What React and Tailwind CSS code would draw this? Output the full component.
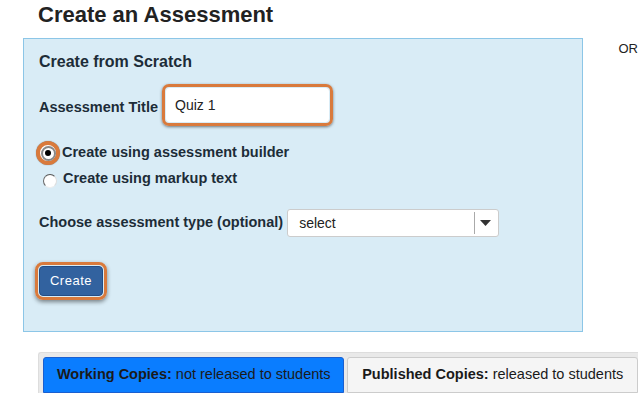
export default function App() {
  return (
    <div className="w-[638px] h-[393px] overflow-hidden bg-white relative" style={{ fontFamily: '"Liberation Sans", Arial, sans-serif' }}>
      <h1 className="pl-[38px] pt-[3px] h-[38px] text-[22px] font-bold text-[#222] leading-[24px]">Create an Assessment</h1>
      <div className="flex">
        <div className="ml-[23px] w-[561px] h-[294px] bg-[#d9ecf6] border border-[#8cc6e7] pl-[15px] pt-[13px] text-[#1d2c38]">
          <div className="text-[16px] font-bold leading-[20px]">Create from Scratch</div>
          <div className="flex items-center mt-[12px]">
            <span className="text-[14.5px] font-bold mt-[6px]">Assessment Title</span>
            <div className="ml-[4px] rounded-[7px] border-[3px] border-[#d97a3c] p-[1px] shadow-[0_1px_3px_rgba(0,0,0,0.5)]">
              <div className="w-[163px] h-[34px] bg-white rounded-[4px] flex items-center pl-[9px] text-[14px] text-[#222]">Quiz 1</div>
            </div>
          </div>
          <div className="flex items-center mt-[14px] -ml-[3px] h-[26px]">
            <div className="w-[24px] h-[24px] rounded-full border-[4px] border-[#d97a3c] bg-white flex items-center justify-center shadow-[0_0_1px_rgba(0,0,0,0.5)]">
              <div className="w-[15px] h-[15px] rounded-full bg-white border-[2px] border-[#888] flex items-center justify-center">
                <div className="w-[6px] h-[6px] rounded-full bg-black"></div>
              </div>
            </div>
            <span className="text-[14.5px] font-bold ml-[2px]">Create using assessment builder</span>
          </div>
          <div className="flex items-center ml-[4px] h-[26px]">
            <div className="w-[14px] h-[14px] rounded-full bg-white border border-t-[#555] border-l-[#666] border-r-[#ddd] border-b-[#eee] mt-[3px]"></div>
            <span className="text-[14.5px] font-bold ml-[6px]">Create using markup text</span>
          </div>
          <div className="flex items-center mt-[17px]">
            <span className="text-[14.5px] font-bold">Choose assessment type (optional)</span>
            <div className="ml-[4px] w-[212px] h-[28px] bg-white border border-[#ccc] rounded-[3px] flex items-center text-[14px] text-[#222]">
              <span className="pl-[11px] flex-1">select</span>
              <div className="w-px h-[22px] bg-[#aaa]"></div>
              <svg width="22" height="10" viewBox="0 0 22 10" className="mr-[1px]"><path d="M5 2 L16 2 L10.5 8 Z" fill="#333" /></svg>
            </div>
          </div>
          <div className="mt-[25px] -ml-[4px] inline-flex rounded-[8px] border-[3px] border-[#d97a3c] p-[1px] shadow-[0_2px_4px_rgba(0,0,0,0.45)]">
            <div className="w-[64px] h-[30px] rounded-[4px] bg-[#32629f] border border-[#244d85] text-white text-[13px] flex items-center justify-center tracking-[0.5px]">Create</div>
          </div>
        </div>
        <div className="ml-[36px] mt-[1px] text-[13px] text-[#222]">OR</div>
      </div>
      <div className="mt-[20px] ml-[38px] h-[41px] bg-[#e9e9e9] border-t border-l border-[#ddd] rounded-tl-[3px] flex items-end gap-[3px] pl-[4px] pt-[4px]">
        <div className="w-[302px] h-[36px] bg-[#0a7dff] border border-[#1a5fd0] rounded-t-[3px] flex items-center justify-center text-[14.5px] text-[#1a1a1a]">
          <b className="mr-[4px]">Working Copies:</b>not released to students
        </div>
        <div className="w-[291px] h-[36px] bg-[#f5f5f5] border border-[#ccc] rounded-t-[3px] flex items-center justify-center text-[14.5px] text-[#1a1a1a]">
          <b className="mr-[4px]">Published Copies:</b>released to students
        </div>
      </div>
    </div>
  );
}
